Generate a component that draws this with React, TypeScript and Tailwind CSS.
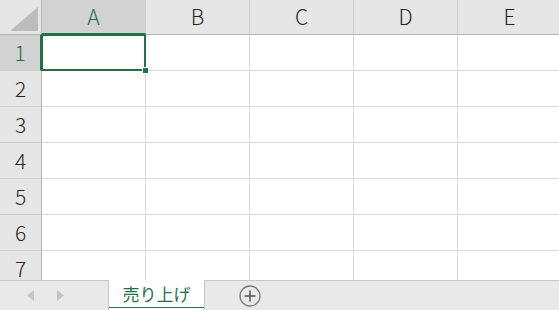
const COLS = ["A", "B", "C", "D", "E"];
const ROWS = [1, 2, 3, 4, 5, 6, 7];

const font = { fontFamily: '"Noto Sans CJK JP", "Noto Sans", sans-serif' };

export default function App() {
  return (
    <div className="w-[559px] h-[310px] overflow-hidden flex flex-col bg-white select-none" style={font}>
      <div className="flex-1 overflow-hidden">
        {/* column headers */}
        <div className="flex h-[35px]">
          <div className="w-[42px] shrink-0 bg-[#e6e6e6] border-r border-b border-[#b5b5b5] relative">
            <svg className="absolute right-[3px] bottom-[3px]" width="28" height="24" viewBox="0 0 28 24">
              <polygon points="28,0 28,24 0,24" fill="#bcbcbc" />
            </svg>
          </div>
          {COLS.map((c, i) => (
            <div
              key={c}
              className={`w-[104px] shrink-0 flex items-center justify-center text-[21px] font-light border-r border-[#cfcfcf] ${
                i === 0
                  ? "bg-[#d2d2d2] text-[#217346] border-b-2 border-b-[#217346]"
                  : "bg-[#e6e6e6] text-[#262626] border-b border-b-[#b5b5b5]"
              }`}
            >
              {c}
            </div>
          ))}
        </div>
        {ROWS.map((r) => (
          <div key={r} className="flex h-[36px]">
            <div
              className={`w-[42px] shrink-0 flex items-center justify-center text-[21px] font-light border-b border-[#cfcfcf] ${
                r === 1
                  ? "bg-[#d2d2d2] text-[#217346] border-r-2 border-r-[#217346]"
                  : "bg-[#e6e6e6] text-[#262626] border-r border-r-[#b5b5b5]"
              }`}
            >
              {r}
            </div>
            {COLS.map((c, i) => (
              <div key={c} className="w-[104px] shrink-0 border-r border-b border-[#d9d9d9] relative">
                {r === 1 && i === 0 && (
                  <>
                    <div className="absolute -left-px -top-px right-[-1px] bottom-[-1px] border-2 border-[#217346]" />
                    <div className="absolute right-[-4px] bottom-[-4px] w-[7px] h-[7px] bg-[#217346] border border-white z-10" />
                  </>
                )}
              </div>
            ))}
          </div>
        ))}
      </div>
      {/* sheet tabs */}
      <div className="h-[30px] shrink-0 bg-[#e9e9e9] border-t border-[#c6c6c6] flex items-stretch">
        <div className="w-[108px] flex items-center gap-[23px] pl-[27px]">
          <svg width="7" height="11" viewBox="0 0 7 11">
            <polygon points="7,0 7,11 0,5.5" fill="#c4c4c4" />
          </svg>
          <svg width="7" height="11" viewBox="0 0 7 11">
            <polygon points="0,0 0,11 7,5.5" fill="#c4c4c4" />
          </svg>
        </div>
        <div className="w-[97px] -mt-px bg-white border-x border-[#c6c6c6] flex flex-col">
          <div className="flex-1 flex items-center justify-center text-[17px] text-[#217346] pt-[1px]">売り上げ</div>
          <div className="h-[2px] bg-[#217346] mb-[3px]" />
        </div>
        <div className="flex items-center pl-[34px]">
          <svg width="22" height="22" viewBox="0 0 22 22">
            <circle cx="11" cy="11" r="10" fill="none" stroke="#7a7a7a" strokeWidth="1.3" />
            <line x1="11" y1="5.5" x2="11" y2="16.5" stroke="#5a5a5a" strokeWidth="1.6" />
            <line x1="5.5" y1="11" x2="16.5" y2="11" stroke="#5a5a5a" strokeWidth="1.6" />
          </svg>
        </div>
      </div>
    </div>
  );
}
